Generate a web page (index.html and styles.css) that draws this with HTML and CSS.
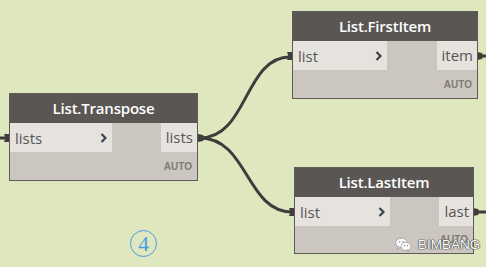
FILE: index.html
```html
<!DOCTYPE html>
<html lang="en">
<head>
    <meta charset="UTF-8">
    <title>List nodes</title>
    <link rel="stylesheet" href="styles.css">
</head>
<body>
<div class="canvas">
    <svg class="wires" width="486" height="267" viewBox="0 0 486 267">
        <path d="M0 138 L6 138" />
        <path d="M200 138 C248 138 244 57 290 57" />
        <path d="M200 138 C248 138 246 212 292 212" />
        <path d="M478 56 L486 56" />
        <path d="M474 212 L486 212" />
        <g class="port">
            <path d="M4 134 L10 134 L10 142 L4 142 Q6 138 4 134 Z" />
            <path d="M198 134 L203 135 Q205 138 203 141 L198 142 Z" />
            <path d="M287 52 L293 52 L293 60 L287 60 Q289 56 287 52 Z" />
            <path d="M477 52 L482 53 Q484 56 482 59 L477 60 Z" />
            <path d="M289 208 L295 208 L295 216 L289 216 Q291 212 289 208 Z" />
            <path d="M473 208 L478 209 Q480 212 478 215 L473 216 Z" />
        </g>
    </svg>

    <div class="node transpose">
        <div class="title">List.Transpose</div>
        <div class="row">
            <div class="in" style="width:102px">lists<span class="chev"><svg width="7" height="10" viewBox="0 0 7 10"><path d="M1.5 1 L5.5 5 L1.5 9" /></svg></span></div>
            <div class="out">lists</div>
        </div>
        <div class="foot">AUTO</div>
    </div>

    <div class="node first">
        <div class="title">List.FirstItem</div>
        <div class="row">
            <div class="in" style="width:94px">list<span class="chev"><svg width="7" height="10" viewBox="0 0 7 10"><path d="M1.5 1 L5.5 5 L1.5 9" /></svg></span></div>
            <div class="out">item</div>
        </div>
        <div class="foot">AUTO</div>
    </div>

    <div class="node last">
        <div class="title">List.LastItem</div>
        <div class="row">
            <div class="in" style="width:95px">list<span class="chev"><svg width="7" height="10" viewBox="0 0 7 10"><path d="M1.5 1 L5.5 5 L1.5 9" /></svg></span></div>
            <div class="out">last</div>
        </div>
        <div class="foot">AUTO</div>
    </div>

    <div class="step">4</div>

    <div class="mark">
        <svg width="17" height="15" viewBox="0 0 17 15">
            <ellipse cx="6.5" cy="6" rx="5.8" ry="4.8" />
            <path d="M3 9.5 L2 12.5 L5.5 10.5 Z" />
            <ellipse cx="11" cy="9.5" rx="5" ry="4.2" />
            <path d="M13.5 12.8 L14.8 14.6 L11.8 13.3 Z" />
            <circle cx="4.6" cy="4.8" r="0.8" class="eye" />
            <circle cx="8.2" cy="4.8" r="0.8" class="eye" />
            <circle cx="9.6" cy="8.8" r="0.7" class="eye" />
            <circle cx="12.6" cy="8.8" r="0.7" class="eye" />
        </svg>
        <span>BIMBANG</span>
    </div>
</div>
</body>
</html>
```

FILE: styles.css
```css
body{
    margin: 0;
    background: #dee7bd;
}
.canvas{
    position: relative;
    width: 486px;
    height: 267px;
    overflow: hidden;
    background: #dee7bd;
    font-family: "Open Sans", "Liberation Sans", sans-serif;
}
.wires{
    position: absolute;
    top: 0;
    left: 0;
}
.wires > path{
    fill: none;
    stroke: #3f3d3b;
    stroke-width: 3;
}
.port path{
    fill: #3f3d3b;
}
.node{
    position: absolute;
    box-sizing: border-box;
    height: 88px;
    border: 1px solid #5d5a57;
    background: #cbc7c0;
    display: flex;
    flex-direction: column;
}
.transpose{
    left: 9px;
    top: 93px;
    width: 189px;
}
.first{
    left: 292px;
    top: 11px;
    width: 186px;
}
.last{
    left: 294px;
    top: 167px;
    width: 180px;
    height: 87px;
}
.title{
    height: 29px;
    background: #595654;
    color: #fff;
    font-weight: 600;
    font-size: 15px;
    line-height: 29px;
    text-align: center;
    letter-spacing: -0.2px;
}
.row{
    height: 29px;
    display: flex;
    justify-content: space-between;
}
.in, .out{
    background: #e6e3de;
    color: #565656;
    font-size: 15px;
    line-height: 28px;
}
.in{
    box-sizing: border-box;
    padding-left: 5px;
    padding-right: 5px;
    display: flex;
    justify-content: space-between;
    align-items: center;
}
.out{
    padding: 0 4px 0 5px;
}
.chev{
    display: flex;
}
.chev path{
    fill: none;
    stroke: #3a4350;
    stroke-width: 2.2;
}
.foot{
    flex: 1;
    display: flex;
    align-items: center;
    justify-content: flex-end;
    padding-right: 5px;
    font-size: 10px;
    font-weight: 700;
    color: #7f7a75;
    font-family: "Liberation Sans", sans-serif;
}
.step{
    position: absolute;
    left: 130px;
    top: 230px;
    width: 25px;
    height: 25px;
    border: 1px solid #4d9be6;
    border-radius: 50%;
    color: #4d9be6;
    font-family: "Liberation Serif", serif;
    font-size: 22px;
    line-height: 26px;
    text-align: center;
}
.mark{
    position: absolute;
    left: 395px;
    top: 237px;
    display: flex;
    align-items: center;
    gap: 6px;
}
.mark ellipse, .mark path{
    fill: #fafafa;
    stroke: #9a9a9a;
    stroke-width: 0.8;
}
.mark .eye{
    fill: #8a8a8a;
}
.mark span{
    font-family: "Liberation Sans", sans-serif;
    font-size: 13.5px;
    color: #fff;
    text-shadow: 0 0 1px #444, 0 0 1px #444, 0 0 1px #444, 0 0 1px #444;
    letter-spacing: 0;
}
```
